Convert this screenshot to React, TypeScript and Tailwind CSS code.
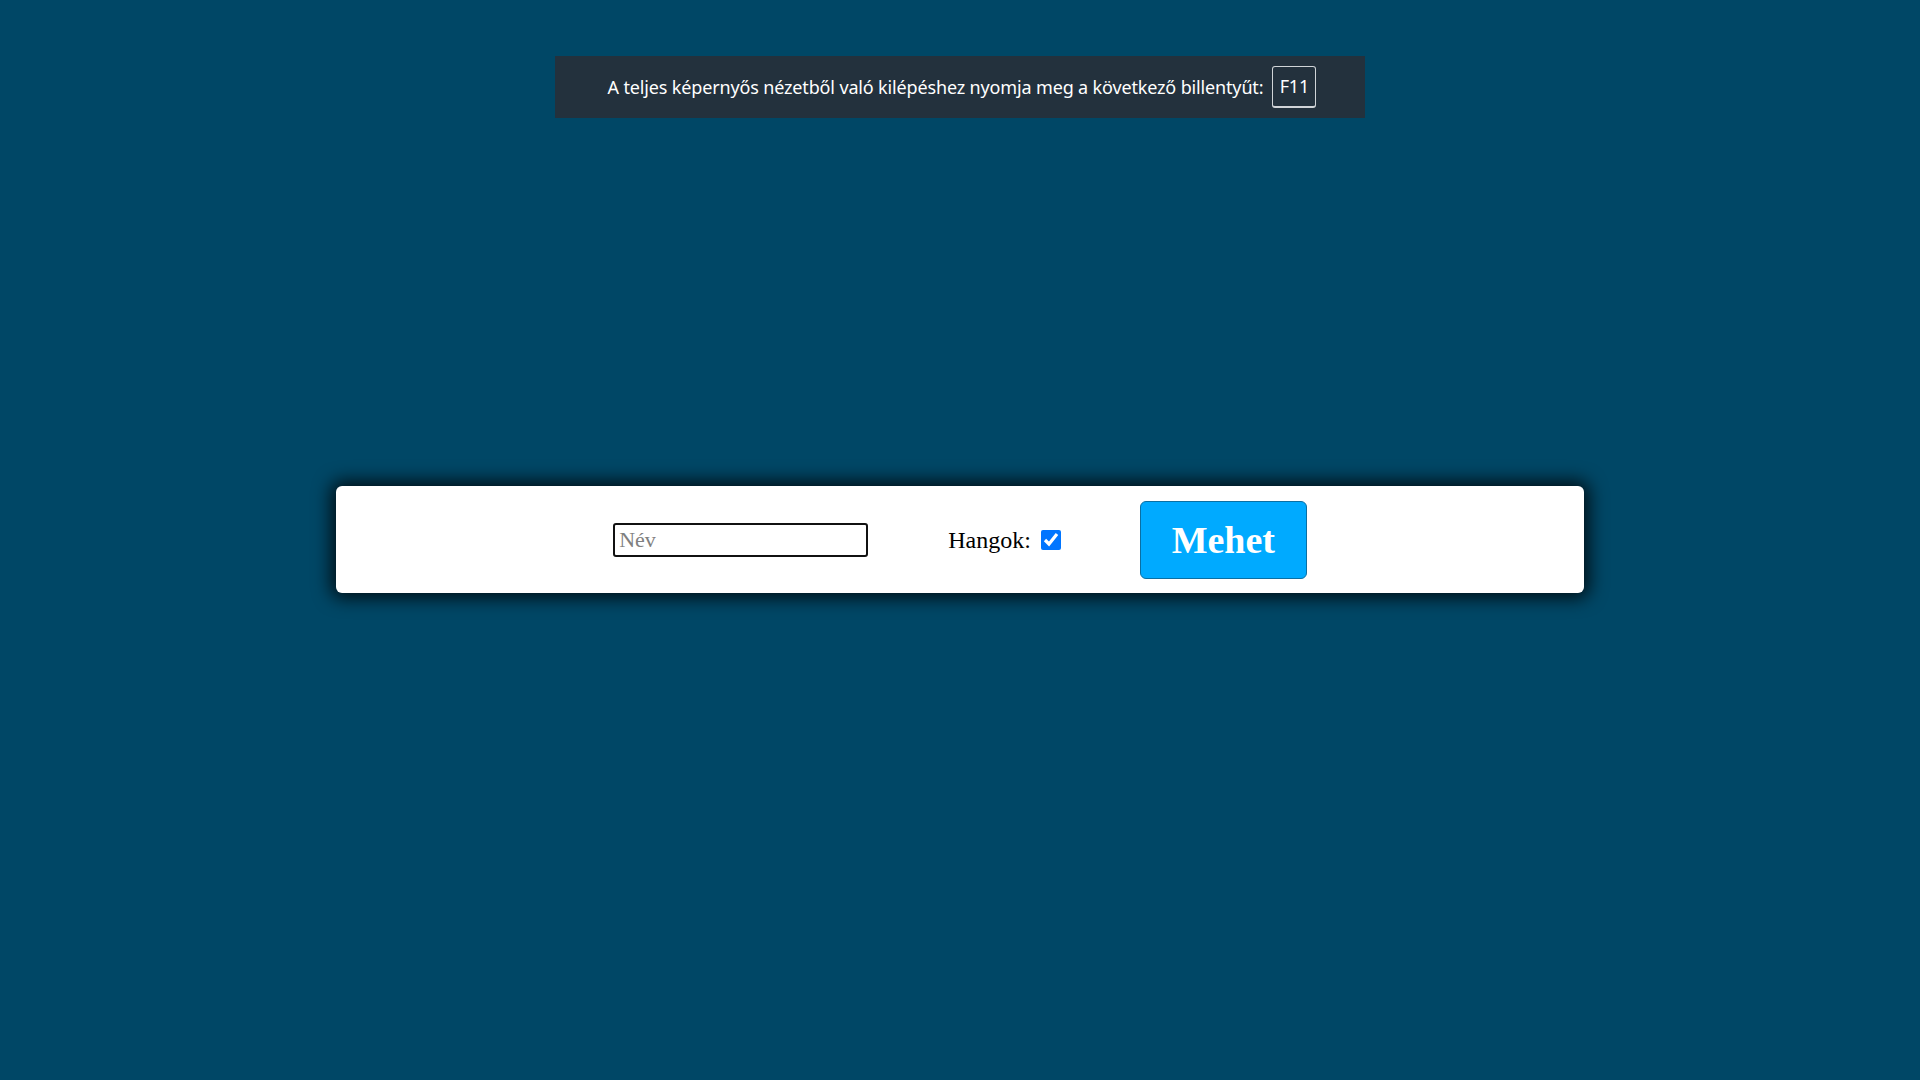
import { useState } from 'react';

export default function App() {
  const [name, setName] = useState('');
  const [sounds, setSounds] = useState(true);

  return (
    <div className="min-h-screen w-full bg-[#004766] flex flex-col items-center">
      {/* teljes képernyő értesítés */}
      <div className="mt-[56px] w-[810px] h-[62px] bg-[#23313d] flex items-center justify-center gap-[9px] pl-[4px] text-white font-['Noto_Sans',sans-serif] text-[18px] tracking-[-0.15px]">
        <span>A teljes képernyős nézetből való kilépéshez nyomja meg a következő billentyűt:</span>
        <span className="w-[44px] h-[42px] flex items-center justify-center border border-[#d0d4d8] border-b-2 rounded-[3px] text-[18px]">
          F11
        </span>
      </div>

      {/* kártya */}
      <div className="mt-[368px] w-[65%] h-[107px] bg-white rounded-[6px] shadow-[0_0_18px_5px_rgba(0,0,0,0.8)] flex items-center justify-center font-['Liberation_Serif',serif]">
        <input
          type="text"
          placeholder="Név"
          value={name}
          onChange={(e) => setName(e.target.value)}
          className="w-[255px] h-[34px] border-2 border-[#111] rounded-[3px] px-[4px] text-[22px] text-black placeholder:text-[#808080] outline-none"
        />
        <label className="ml-[80px] flex items-center text-[24px] text-black">
          Hangok:
          <input
            type="checkbox"
            checked={sounds}
            onChange={(e) => setSounds(e.target.checked)}
            className="ml-[10px] w-[20px] h-[20px] accent-[#0075ff]"
          />
        </label>
        <button className="ml-[79px] w-[167px] h-[78px] bg-[#00aaff] border border-[#0a6fa3] rounded-[6px] text-white font-bold text-[38px] leading-none">
          Mehet
        </button>
      </div>
    </div>
  );
}
